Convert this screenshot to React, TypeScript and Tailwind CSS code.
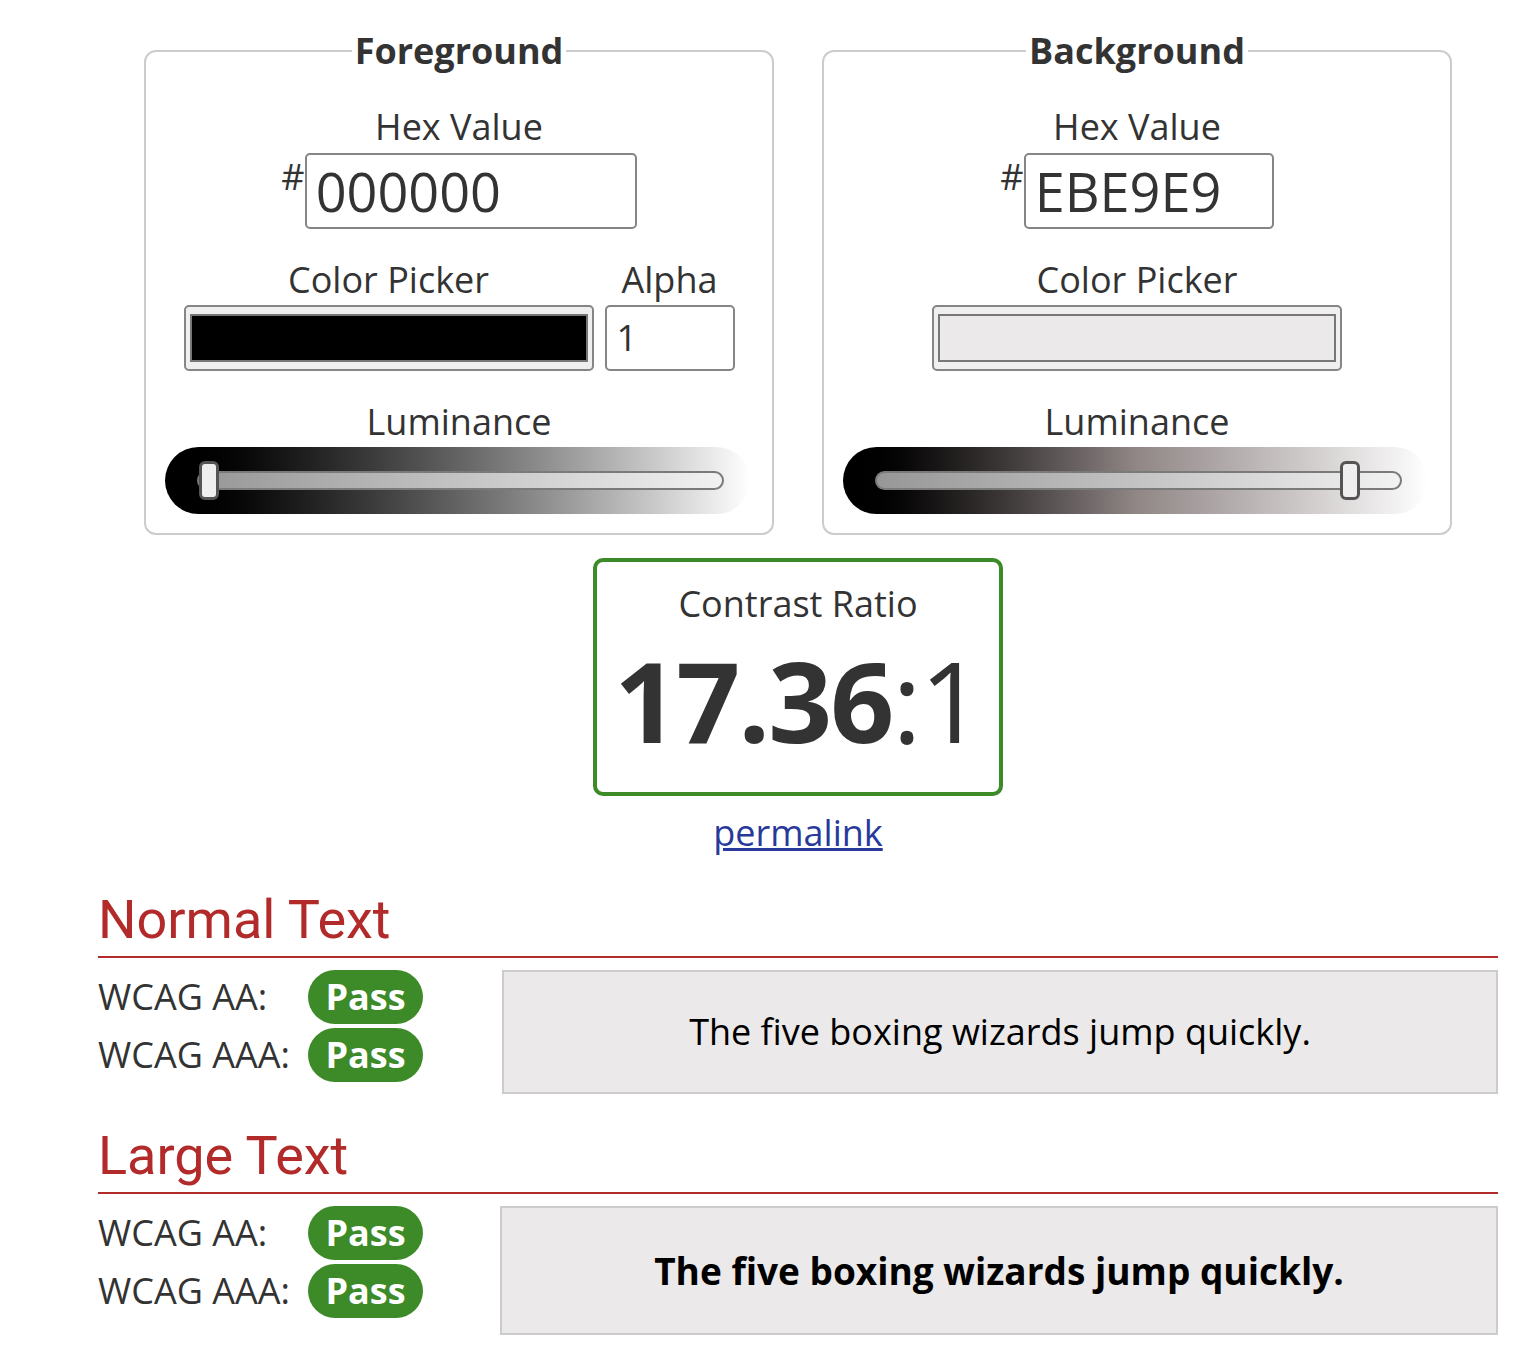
import React from "react";

function Slider({ gradient, thumbLeft }: { gradient: string; thumbLeft: number }) {
  return (
    <div className={`mt-[1px] ml-[19px] w-[585px] h-[67px] rounded-full ${gradient} pl-[32px] pr-[26px] flex items-center`}>
      <div className="relative h-[19px] w-full rounded-full border-2 border-[#7a7a7a] bg-linear-to-r from-[#979797] to-[#f2f2f2]">
        <div
          className="absolute top-[-12px] w-[20px] h-[39px] rounded-[6px] border-[3px] border-[#555] bg-[#efefef]"
          style={{ left: thumbLeft }}
        />
      </div>
    </div>
  );
}

function Label({ children }: { children: React.ReactNode }) {
  return <div className="text-[36px] leading-[48px] text-center">{children}</div>;
}

function HexRow({ value, width }: { value: string; width: number }) {
  return (
    <div className="mt-[2px] flex justify-center items-start">
      <span className="text-[36px] leading-[36px] mt-[6px]">#</span>
      <div
        className="h-[76px] border-2 border-[#858585] rounded-[5px] pl-[9px] text-[54px] leading-[72px]"
        style={{ width }}
      >
        {value}
      </div>
    </div>
  );
}

function Picker({ color }: { color: string }) {
  return (
    <div className="mt-[1px] w-[410px] h-[66px] rounded-[5px] border-2 border-[#858585] bg-[#efefef] px-[4px] py-[7px]">
      <div className="h-full border-2 border-[#777]" style={{ background: color }} />
    </div>
  );
}

function ResultRows({ bold, leftW, boxH }: { bold: boolean; leftW: string; boxH: string }) {
  return (
    <div className="mt-[12px] flex">
      <div className={`${leftW} flex flex-col gap-[4px]`}>
        {["WCAG AA:", "WCAG AAA:"].map((l) => (
          <div key={l} className="flex items-center h-[54px]">
            <span className="w-[210px] text-[36px] leading-[48px] text-[#333]">{l}</span>
            <span className="w-[115px] h-[54px] rounded-full bg-[#3d8a28] text-white font-bold text-[36px] leading-[48px] flex items-center justify-center">
              Pass
            </span>
          </div>
        ))}
      </div>
      <div
        className={`flex-1 ${boxH} border-2 border-[#cccccc] bg-[#ebe9e9] flex items-center justify-center text-black ${
          bold ? "font-bold text-[37px]" : "text-[36px]"
        }`}
      >
        The five boxing wizards jump quickly.
      </div>
    </div>
  );
}

export default function App() {
  return (
    <div className="min-h-[1368px] bg-white text-[#333] font-['Open_Sans',sans-serif]">
      <div className="ml-[98px] w-[1400px] pt-[27px]">
        <div className="flex justify-center gap-[48px]">
          <fieldset className="w-[630px] border-2 border-[#cccccc] rounded-[12px] pt-[28px] pb-[19px]">
            <legend className="mx-auto px-[3px] text-[36px] leading-[48px] font-bold">Foreground</legend>
            <Label>Hex Value</Label>
            <HexRow value="000000" width={332} />
            <div className="mt-[27px] flex justify-center gap-[11px]">
              <div className="flex flex-col items-center">
                <Label>Color Picker</Label>
                <Picker color="#000000" />
              </div>
              <div className="flex flex-col items-center">
                <Label>Alpha</Label>
                <div className="mt-[1px] w-[130px] h-[66px] rounded-[5px] border-2 border-[#858585] pl-[10px] text-[36px] leading-[62px]">
                  1
                </div>
              </div>
            </div>
            <div className="mt-[27px]">
              <Label>Luminance</Label>
            </div>
            <Slider gradient="bg-linear-to-r from-black to-white" thumbLeft={0} />
          </fieldset>
          <fieldset className="w-[630px] border-2 border-[#cccccc] rounded-[12px] pt-[28px] pb-[19px]">
            <legend className="mx-auto px-[3px] text-[36px] leading-[48px] font-bold">Background</legend>
            <Label>Hex Value</Label>
            <HexRow value="EBE9E9" width={250} />
            <div className="mt-[27px] flex justify-center">
              <div className="flex flex-col items-center">
                <Label>Color Picker</Label>
                <Picker color="#ebe9e9" />
              </div>
            </div>
            <div className="mt-[27px]">
              <Label>Luminance</Label>
            </div>
            <Slider gradient="bg-linear-to-r from-black via-[#908686] to-white" thumbLeft={463} />
          </fieldset>
        </div>

        <div className="mt-[23px] mx-auto w-[410px] h-[238px] border-4 border-[#3d8a28] rounded-[10px] flex flex-col items-center">
          <div className="mt-[22px] text-[36px] leading-[40px]">Contrast Ratio</div>
          <div className="text-[112px] leading-[152px] tracking-[-2px]">
            <span className="font-bold">17.36</span>:1
          </div>
        </div>
        <div className="mt-[13px] text-center text-[36px] leading-[48px]">
          <a href="#" className="text-[#28399c] underline">permalink</a>
        </div>

        <h2 className="mt-[32px] font-['Roboto',sans-serif] text-[54px] leading-[62px] text-[#b22a2a] pb-[5px] border-b-2 border-[#b22a2a]">
          Normal Text
        </h2>
        <ResultRows bold={false} leftW="w-[404px]" boxH="h-[124px]" />

        <h2 className="mt-[31px] font-['Roboto',sans-serif] text-[54px] leading-[62px] text-[#b22a2a] pb-[5px] border-b-2 border-[#b22a2a]">
          Large Text
        </h2>
        <ResultRows bold={true} leftW="w-[402px]" boxH="h-[129px]" />
      </div>
    </div>
  );
}
